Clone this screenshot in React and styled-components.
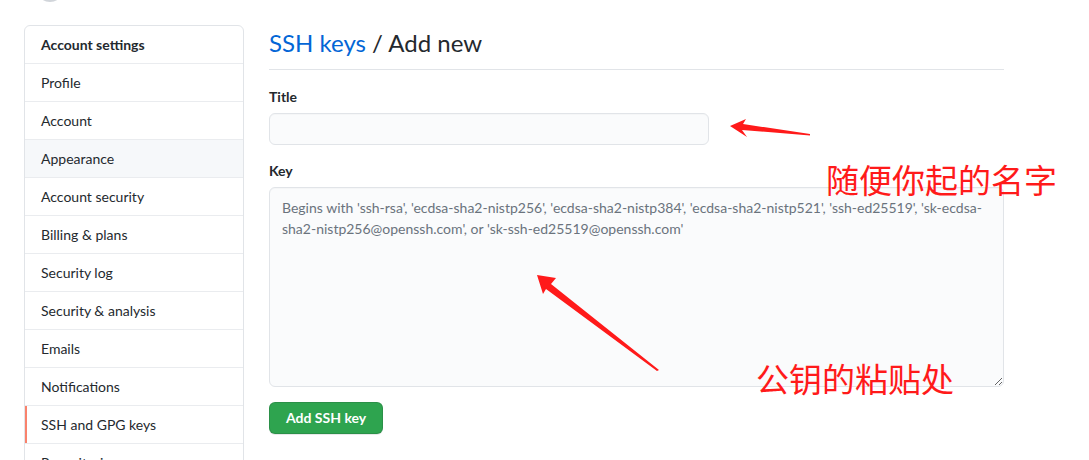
import React from "react";
import styled, { createGlobalStyle } from "styled-components";

const Global = createGlobalStyle`
  html, body { margin: 0; padding: 0; background: #fff; }
  body {
    font-family: "Lato", "Noto Sans", sans-serif;
    font-size: 14px;
    line-height: 1.5;
    color: #24292e;
    overflow: hidden;
  }
  * { box-sizing: border-box; }
`;

const Page = styled.div`
  position: relative;
  display: flex;
  align-items: flex-start;
  gap: 25px;
  padding: 25px 0 0 24px;
  width: 1089px;
  height: 460px;
  overflow: hidden;
`;

const Avatar = styled.div`
  position: absolute;
  left: 36px;
  top: -26px;
  width: 28px;
  height: 28px;
  border-radius: 50%;
  background: #d1d5da;
`;

const Sidebar = styled.nav`
  width: 220px;
  flex: none;
  border: 1px solid #e1e4e8;
  border-radius: 6px;
  overflow: hidden;
`;

const SideHeader = styled.div`
  padding: 8px 16px;
  font-weight: 700;
  line-height: 21px;
  border-bottom: 1px solid #eaecef;
`;

const SideItem = styled.a`
  position: relative;
  display: block;
  padding: 8px 16px;
  line-height: 21px;
  color: #24292e;
  text-decoration: none;
  border-bottom: 1px solid #eaecef;
  background: ${(p) => (p.$hover ? "#f6f8fa" : "#fff")};
  &::before {
    content: "";
    position: absolute;
    left: 0;
    top: 0;
    bottom: 0;
    width: 2px;
    background: ${(p) => (p.$active ? "#f9826c" : "transparent")};
  }
`;

const Main = styled.main`
  width: 735px;
  flex: none;
`;

const Heading = styled.h2`
  margin: 0;
  padding-bottom: 8px;
  font-size: 24px;
  font-weight: 400;
  line-height: 36px;
  border-bottom: 1px solid #e1e4e8;
`;

const Crumb = styled.a`
  color: #0366d6;
  text-decoration: none;
`;

const Form = styled.form`
  display: flex;
  flex-direction: column;
  align-items: flex-start;
  padding-top: 16px;
`;

const Group = styled.div`
  display: flex;
  flex-direction: column;
  width: ${(p) => p.$width || "100%"};
  margin-bottom: 15px;
`;

const Label = styled.label`
  font-weight: 700;
  line-height: 21px;
  margin-bottom: 6px;
`;

const Input = styled.input`
  height: 32px;
  width: 440px;
  padding: 5px 12px;
  font: inherit;
  background: #fafbfc;
  border: 1px solid #e1e4e8;
  border-radius: 6px;
  box-shadow: inset 0 1px 0 rgba(225, 228, 232, 0.2);
  outline: none;
`;

const TextArea = styled.textarea`
  height: 200px;
  width: 735px;
  padding: 9px 12px;
  font: inherit;
  line-height: 21px;
  color: #24292e;
  background: #fafbfc;
  border: 1px solid #e1e4e8;
  border-radius: 6px;
  box-shadow: inset 0 1px 0 rgba(225, 228, 232, 0.2);
  outline: none;
  resize: vertical;
  &::placeholder {
    color: #6a737d;
  }
`;

const Button = styled.button`
  height: 32px;
  padding: 5px 16px;
  font: inherit;
  font-weight: 700;
  line-height: 20px;
  color: #fff;
  background: #2ea44f;
  border: 1px solid rgba(27, 31, 35, 0.15);
  border-radius: 6px;
  box-shadow: 0 1px 0 rgba(27, 31, 35, 0.1);
  cursor: pointer;
`;

const Overlay = styled.svg`
  position: absolute;
  left: 0;
  top: 0;
  width: 1089px;
  height: 460px;
  pointer-events: none;
`;

const Note = styled.div`
  position: absolute;
  left: ${(p) => p.$x}px;
  top: ${(p) => p.$y}px;
  font-family: "Noto Sans CJK SC", sans-serif;
  font-size: 33px;
  line-height: 1;
  color: #ff1a1a;
  white-space: nowrap;
  pointer-events: none;
`;

const items = [
  "Profile",
  "Account",
  "Appearance",
  "Account security",
  "Billing & plans",
  "Security log",
  "Security & analysis",
  "Emails",
  "Notifications",
  "SSH and GPG keys",
  "Repositories",
  "Organizations",
];

export default function App() {
  return (
    <>
      <Global />
      <Page>
        <Avatar />
        <Sidebar>
          <SideHeader>Account settings</SideHeader>
          {items.map((it) => (
            <SideItem
              key={it}
              href="#"
              $hover={it === "Appearance"}
              $active={it === "SSH and GPG keys"}
            >
              {it}
            </SideItem>
          ))}
        </Sidebar>
        <Main>
          <Heading>
            <Crumb href="#">SSH keys</Crumb> / Add new
          </Heading>
          <Form onSubmit={(e) => e.preventDefault()}>
            <Group>
              <Label htmlFor="title">Title</Label>
              <Input id="title" type="text" />
            </Group>
            <Group>
              <Label htmlFor="key">Key</Label>
              <TextArea
                id="key"
                placeholder="Begins with 'ssh-rsa', 'ecdsa-sha2-nistp256', 'ecdsa-sha2-nistp384', 'ecdsa-sha2-nistp521', 'ssh-ed25519', 'sk-ecdsa-sha2-nistp256@openssh.com', or 'sk-ssh-ed25519@openssh.com'"
              />
            </Group>
            <Button type="submit">Add SSH key</Button>
          </Form>
        </Main>
        <Overlay viewBox="0 0 1089 460">
          <polygon
            fill="#ff1a1a"
            points="730,126 746,119 743,124 810,134 810,135.5 742,130 747,137"
          />
          <polygon
            fill="#ff1a1a"
            points="537,275 556,278 551,284 659,370 657,371 546,289 543,294"
          />
        </Overlay>
        <Note $x={826} $y={163}>随便你起的名字</Note>
        <Note $x={756} $y={362}>公钥的粘贴处</Note>
      </Page>
    </>
  );
}
